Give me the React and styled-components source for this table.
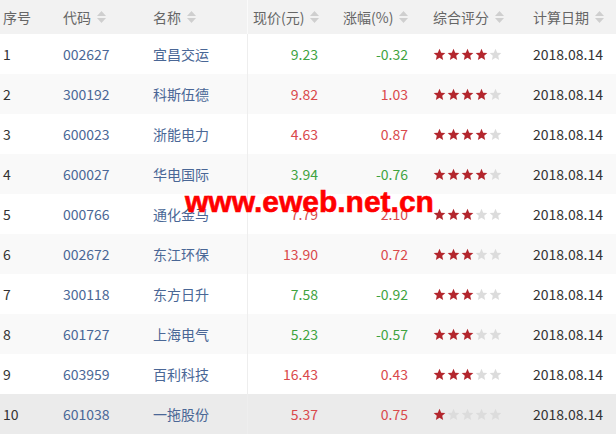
import React from "react";
import styled, { createGlobalStyle } from "styled-components";

const Global = createGlobalStyle`
  body {
    margin: 0;
    background: #fff;
    font-family: "Noto Sans CJK SC", "Noto Sans", sans-serif;
  }
`;

const rows = [
  ["1", "002627", "宜昌交运", "9.23", "-0.32", 4, false],
  ["2", "300192", "科斯伍德", "9.82", "1.03", 4, false],
  ["3", "600023", "浙能电力", "4.63", "0.87", 4, false],
  ["4", "600027", "华电国际", "3.94", "-0.76", 4, false],
  ["5", "000766", "通化金马", "7.79", "2.10", 3, false],
  ["6", "002672", "东江环保", "13.90", "0.72", 3, false],
  ["7", "300118", "东方日升", "7.58", "-0.92", 3, false],
  ["8", "601727", "上海电气", "5.23", "-0.57", 3, false],
  ["9", "603959", "百利科技", "16.43", "0.43", 3, false],
  ["10", "601038", "一拖股份", "5.37", "0.75", 1, true],
];

const Wrap = styled.div`
  position: relative;
  width: 616px;
`;

const Grid = styled.div`
  display: grid;
  grid-template-columns: 60px 90px 97px 91px 90px 100px 88px;
`;

const Row = styled(Grid)`
  height: ${(p) => (p.$head ? 34 : 40)}px;
  background: ${(p) =>
    p.$head ? "#f2f2f2" : p.$active ? "#ebebeb" : p.$odd ? "#fff" : "#f9f9f9"};
  color: ${(p) => (p.$head ? "#666" : "#333")};
  font-size: 14px;
`;

const Cell = styled.div`
  display: flex;
  align-items: center;
  justify-content: ${(p) => (p.$right ? "flex-end" : "flex-start")};
  padding: ${(p) => (p.$right ? "0 20px 0 0" : `0 0 0 ${p.$pad ?? 3}px`)};
  color: ${(p) => p.$color || "inherit"};
  border-left: ${(p) => (p.$line ? `1px solid ${p.$line}` : "none")};
  white-space: nowrap;
`;

const Sort = styled.svg`
  margin-left: 6px;
  width: 9px;
  height: 12px;
`;

const SortIcon = () => (
  <Sort viewBox="0 0 9 12">
    <path d="M4.5 0 L9 5 L0 5 Z" fill="#cfcfcf" />
    <path d="M4.5 12 L9 7 L0 7 Z" fill="#cfcfcf" />
  </Sort>
);

const Stars = styled.div`
  display: flex;
  gap: 1px;
`;

const Star = ({ on }) => (
  <svg width="13" height="13" viewBox="0 0 24 24">
    <path
      d="M12 1.5l3.1 7.1 7.7.7-5.8 5.1 1.7 7.6L12 18l-6.7 4 1.7-7.6L1.2 9.3l7.7-.7z"
      fill={on ? "#b3262d" : "#dcdcdc"}
    />
  </svg>
);

// red watermark stamped over the table
const Mark = styled.div`
  position: absolute;
  left: 185px;
  top: 185px;
  color: #ff0000;
  font-family: "Liberation Sans", Arial, sans-serif;
  font-weight: bold;
  font-size: 30px;
  -webkit-text-stroke: 0.6px #ff0000;
  pointer-events: none;
`;

const GREEN = "#3fa33f";
const RED = "#d9494b";
const BLUE = "#4a6796";

export default function App() {
  const heads = ["序号", "代码", "名称", "现价(元)", "涨幅(%)", "综合评分", "计算日期"];
  return (
    <Wrap>
      <Global />
      <Row $head>
        {heads.map((h, i) => (
          <Cell key={h} $pad={i >= 3 ? 5 : 3} $line={i === 3 ? "#fafafa" : null}>
            {h}
            {i > 0 && <SortIcon />}
          </Cell>
        ))}
      </Row>
      {rows.map(([n, code, name, price, chg, score, active], i) => {
        const up = !chg.startsWith("-");
        const c = up ? RED : GREEN;
        return (
          <Row key={n} $odd={i % 2 === 0} $active={active}>
            <Cell>{n}</Cell>
            <Cell $color={BLUE}>{code}</Cell>
            <Cell $color={BLUE}>{name}</Cell>
            <Cell $right $color={c} $line="#eeeeee">{price}</Cell>
            <Cell $right $color={c}>{chg}</Cell>
            <Cell $pad={5}>
              <Stars>
                {[0, 1, 2, 3, 4].map((k) => (
                  <Star key={k} on={k < score} />
                ))}
              </Stars>
            </Cell>
            <Cell $pad={5}>2018.08.14</Cell>
          </Row>
        );
      })}
      <Mark>www.eweb.net.cn</Mark>
    </Wrap>
  );
}
